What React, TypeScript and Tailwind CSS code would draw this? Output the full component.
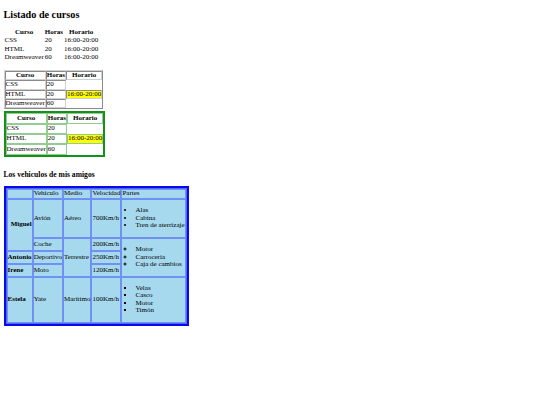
// Listado de cursos + tabla de vehículos, a escala reducida

const cursos = [
  { curso: 'CSS', horas: '20' },
  { curso: 'HTML', horas: '20', horario: '16:00-20:00' },
  { curso: 'Dreamweaver', horas: '60' },
]

function CursosGris() {
  const td = 'border border-t-[#8a8a8a] border-l-[#8a8a8a] border-b-[#d0d0d0] border-r-[#d0d0d0] p-0'
  return (
    <table className="border-separate border-spacing-[0.5px] border border-t-[#d0d0d0] border-l-[#d0d0d0] border-b-[#8a8a8a] border-r-[#8a8a8a]">
      <tbody>
        <tr>
          <th className={`${td} font-bold text-center`}>Curso</th>
          <th className={`${td} font-bold text-center`}>Horas</th>
          <th className={`${td} font-bold text-center`}>Horario</th>
        </tr>
        {cursos.map((c) => (
          <tr key={c.curso}>
            <td className={td}>{c.curso}</td>
            <td className={td}>{c.horas}</td>
            {c.horario && <td className={`${td} bg-[#ffff00]`}>{c.horario}</td>}
          </tr>
        ))}
      </tbody>
    </table>
  )
}

function CursosVerde() {
  const td = 'border border-[#93cc93] px-0 py-[0.5px]'
  return (
    <table className="mt-[2px] border-separate border-spacing-[0.5px] border-2 border-[#15901a]">
      <tbody>
        <tr>
          <th className={`${td} font-bold text-center`}>Curso</th>
          <th className={`${td} font-bold text-center`}>Horas</th>
          <th className={`${td} font-bold text-center`}>Horario</th>
        </tr>
        {cursos.map((c) => (
          <tr key={c.curso}>
            <td className={td}>{c.curso}</td>
            <td className={td}>{c.horas}</td>
            {c.horario && <td className={`${td} bg-[#ffff00]`}>{c.horario}</td>}
          </tr>
        ))}
      </tbody>
    </table>
  )
}

function Vehiculos() {
  const td = 'border border-[#7090f4] bg-[#a6d8ee] px-0 py-[0.5px]'
  const ul = 'pl-[13px] my-[7px]'
  return (
    <table className="border-separate border-spacing-[0.5px] border-2 border-[#0a0ae8] bg-[#4a6af2] p-px">
      <tbody>
        <tr>
          <td className={td}></td>
          <td className={td}>Vehiculo</td>
          <td className={td}>Medio</td>
          <td className={td}>Velocidad</td>
          <td className={td}>Partes</td>
        </tr>
        <tr>
          <th rowSpan={2} className={`${td} font-bold text-right`}>Miguel</th>
          <td className={td}>Avión</td>
          <td className={td}>Aéreo</td>
          <td className={td}>700Km/h</td>
          <td className={td}>
            <ul className={`${ul} list-disc`}>
              <li>Alas</li>
              <li>Cabina</li>
              <li>Tren de aterrizaje</li>
            </ul>
          </td>
        </tr>
        <tr>
          <td className={td}>Coche</td>
          <td rowSpan={3} className={td}>Terrestre</td>
          <td className={td}>200Km/h</td>
          <td rowSpan={3} className={td}>
            <ul className={`${ul} list-[circle]`}>
              <li>Motor</li>
              <li>Carrocería</li>
              <li>Caja de cambios</li>
            </ul>
          </td>
        </tr>
        <tr>
          <th className={`${td} font-bold text-center`}>Antonio</th>
          <td className={td}>Deportivo</td>
          <td className={td}>250Km/h</td>
        </tr>
        <tr>
          <th className={`${td} font-bold text-left`}>Irene</th>
          <td className={td}>Moto</td>
          <td className={td}>120Km/h</td>
        </tr>
        <tr>
          <th className={`${td} font-bold text-left`}>Estela</th>
          <td className={td}>Yate</td>
          <td className={td}>Marítimo</td>
          <td className={td}>100Km/h</td>
          <td className={td}>
            <ul className={`${ul} list-[square]`}>
              <li>Velas</li>
              <li>Casco</li>
              <li>Motor</li>
              <li>Timón</li>
            </ul>
          </td>
        </tr>
      </tbody>
    </table>
  )
}

export default function App() {
  return (
    <div className="min-h-screen bg-white px-[3.5px] pt-px font-['Liberation_Serif',serif] text-[7px] leading-[7.3px] text-black">
      <h2 className="mt-[8px] mb-[7px] text-[10.2px] leading-[12px] font-bold">Listado de cursos</h2>

      {/* ── Sin bordes ── */}
      <table className="border-separate border-spacing-[1px]">
        <tbody>
          <tr>
            <th className="p-0 font-bold text-center">Curso</th>
            <th className="p-0 font-bold text-center">Horas</th>
            <th className="p-0 font-bold text-center">Horario</th>
          </tr>
          {cursos.map((c) => (
            <tr key={c.curso}>
              <td className="p-0">{c.curso}</td>
              <td className="p-0">{c.horas}</td>
              <td className="p-0">16:00-20:00</td>
            </tr>
          ))}
        </tbody>
      </table>
      <div className="h-[8px]" />

      <CursosGris />
      <CursosVerde />

      <h4 className="mt-[13px] mb-[7px] text-[7.6px] leading-[9px] font-bold">Los vehiculos de mis amigos</h4>
      <Vehiculos />
    </div>
  )
}
